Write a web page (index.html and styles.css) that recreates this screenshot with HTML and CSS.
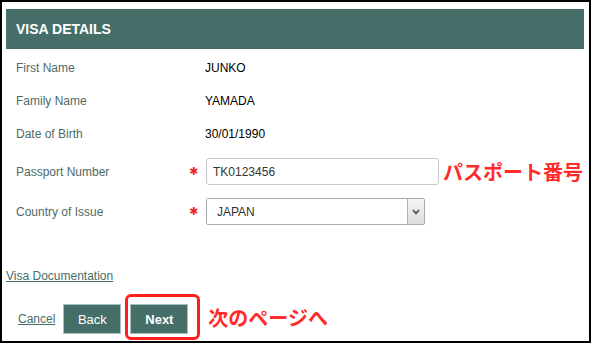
FILE: index.html
```html
<!DOCTYPE html>
<html lang="ja">
<head>
  <meta charset="UTF-8" />
  <meta name="viewport" content="width=device-width, initial-scale=1.0"/>
  <title>Visa Details</title>
  <link rel="stylesheet" href="styles.css">
</head>
<body>

<div class="frame">
  <div class="panel-head">VISA DETAILS</div>

  <div class="info-row top">
    <span class="label">First Name</span>
    <span class="value">JUNKO</span>
  </div>
  <div class="info-row">
    <span class="label">Family Name</span>
    <span class="value">YAMADA</span>
  </div>
  <div class="info-row">
    <span class="label">Date of Birth</span>
    <span class="value">30/01/1990</span>
  </div>

  <div class="field-row first">
    <span class="label short">Passport Number</span>
    <span class="req">&#10033;</span>
    <input class="text-input" type="text" value="TK0123456" />
    <span class="note">パスポート番号</span>
  </div>
  <div class="field-row">
    <span class="label short">Country of Issue</span>
    <span class="req">&#10033;</span>
    <div class="select-box">
      <select class="select">
        <option>JAPAN</option>
      </select>
      <span class="select-arrow">
        <svg width="8" height="6" viewBox="0 0 8 6"><path d="M1 1.2 L4 4.4 L7 1.2" fill="none" stroke="#555" stroke-width="1.8"/></svg>
      </span>
    </div>
  </div>

  <a class="doc-link" href="#">Visa Documentation</a>

  <div class="actions">
    <a class="cancel" href="#">Cancel</a>
    <button class="btn back">Back</button>
    <span class="mark">
      <button class="btn next">Next</button>
    </span>
    <span class="note next-note">次のページへ</span>
  </div>
</div>

</body>
</html>
```

FILE: styles.css
```css
body {
  margin: 0;
  padding: 0;
  background: #fff;
  font-family: 'Liberation Sans', Arial, sans-serif;
  font-size: 12px;
}
.frame {
  width: 587px;
  height: 339px;
  border: 2px solid #000;
}
.panel-head {
  display: flex;
  align-items: center;
  margin: 7px 0 0 4px;
  width: 568px;
  height: 40px;
  padding-left: 10px;
  background: #466e69;
  color: #fff;
  font-size: 14px;
  font-weight: bold;
}
.info-row {
  display: flex;
  align-items: center;
  height: 33px;
  padding-left: 14px;
}
.info-row.top {
  margin-top: 2px;
}
.label {
  width: 189px;
  color: #4f6a66;
}
.label.short {
  width: 173px;
}
.value {
  color: #000;
}
.field-row {
  display: flex;
  align-items: center;
  height: 27px;
  padding-left: 14px;
  margin-top: 13px;
}
.field-row.first {
  margin-top: 8px;
}
.req {
  width: 17px;
  color: #e8262b;
  font-family: 'DejaVu Sans', sans-serif;
  font-size: 11px;
}
.text-input {
  box-sizing: border-box;
  width: 233px;
  height: 27px;
  padding: 0 6px;
  border: 1px solid #c9c9c9;
  border-radius: 3px;
  font-family: 'Liberation Sans', Arial, sans-serif;
  font-size: 12px;
  color: #333;
  outline: none;
}
.select-box {
  box-sizing: border-box;
  display: flex;
  width: 219px;
  height: 27px;
  border: 1px solid #aaa;
  border-radius: 2px;
}
.select {
  flex: 1;
  appearance: none;
  -webkit-appearance: none;
  border: none;
  background: #fff;
  padding: 0 0 0 10px;
  font-family: 'Liberation Sans', Arial, sans-serif;
  font-size: 12px;
  color: #333;
  outline: none;
}
.select-arrow {
  display: flex;
  align-items: center;
  justify-content: center;
  width: 16px;
  border-left: 1px solid #b5b5b5;
  background: linear-gradient(#f6f6f6, #dcdcdc);
}
.note {
  margin-left: 4px;
  color: #ff2a2a;
  font-family: 'Noto Sans CJK JP', sans-serif;
  font-size: 20px;
  font-weight: bold;
  line-height: 24px;
}
.doc-link {
  display: block;
  width: max-content;
  margin: 44px 0 0 4px;
  line-height: 14px;
  color: #466e69;
}
.actions {
  display: flex;
  align-items: flex-start;
  height: 46px;
  margin-top: 11px;
  padding-left: 16px;
}
.cancel {
  margin-top: 18px;
  line-height: 14px;
  color: #466e69;
}
.btn {
  width: 58px;
  height: 30px;
  border: 1px solid #a3c2bd;
  background: #466e69;
  color: #fff;
  font-family: 'Liberation Sans', Arial, sans-serif;
  font-size: 13px;
  cursor: pointer;
}
.back {
  margin: 10px 0 0 8px;
}
.next {
  font-weight: bold;
}
.mark {
  display: flex;
  margin-left: 4px;
  padding: 7px 9px 3px 2px;
  border: 3px solid #ff1f1f;
  border-radius: 6px;
}
.next-note {
  margin: 12px 0 0 8px;
}
```
